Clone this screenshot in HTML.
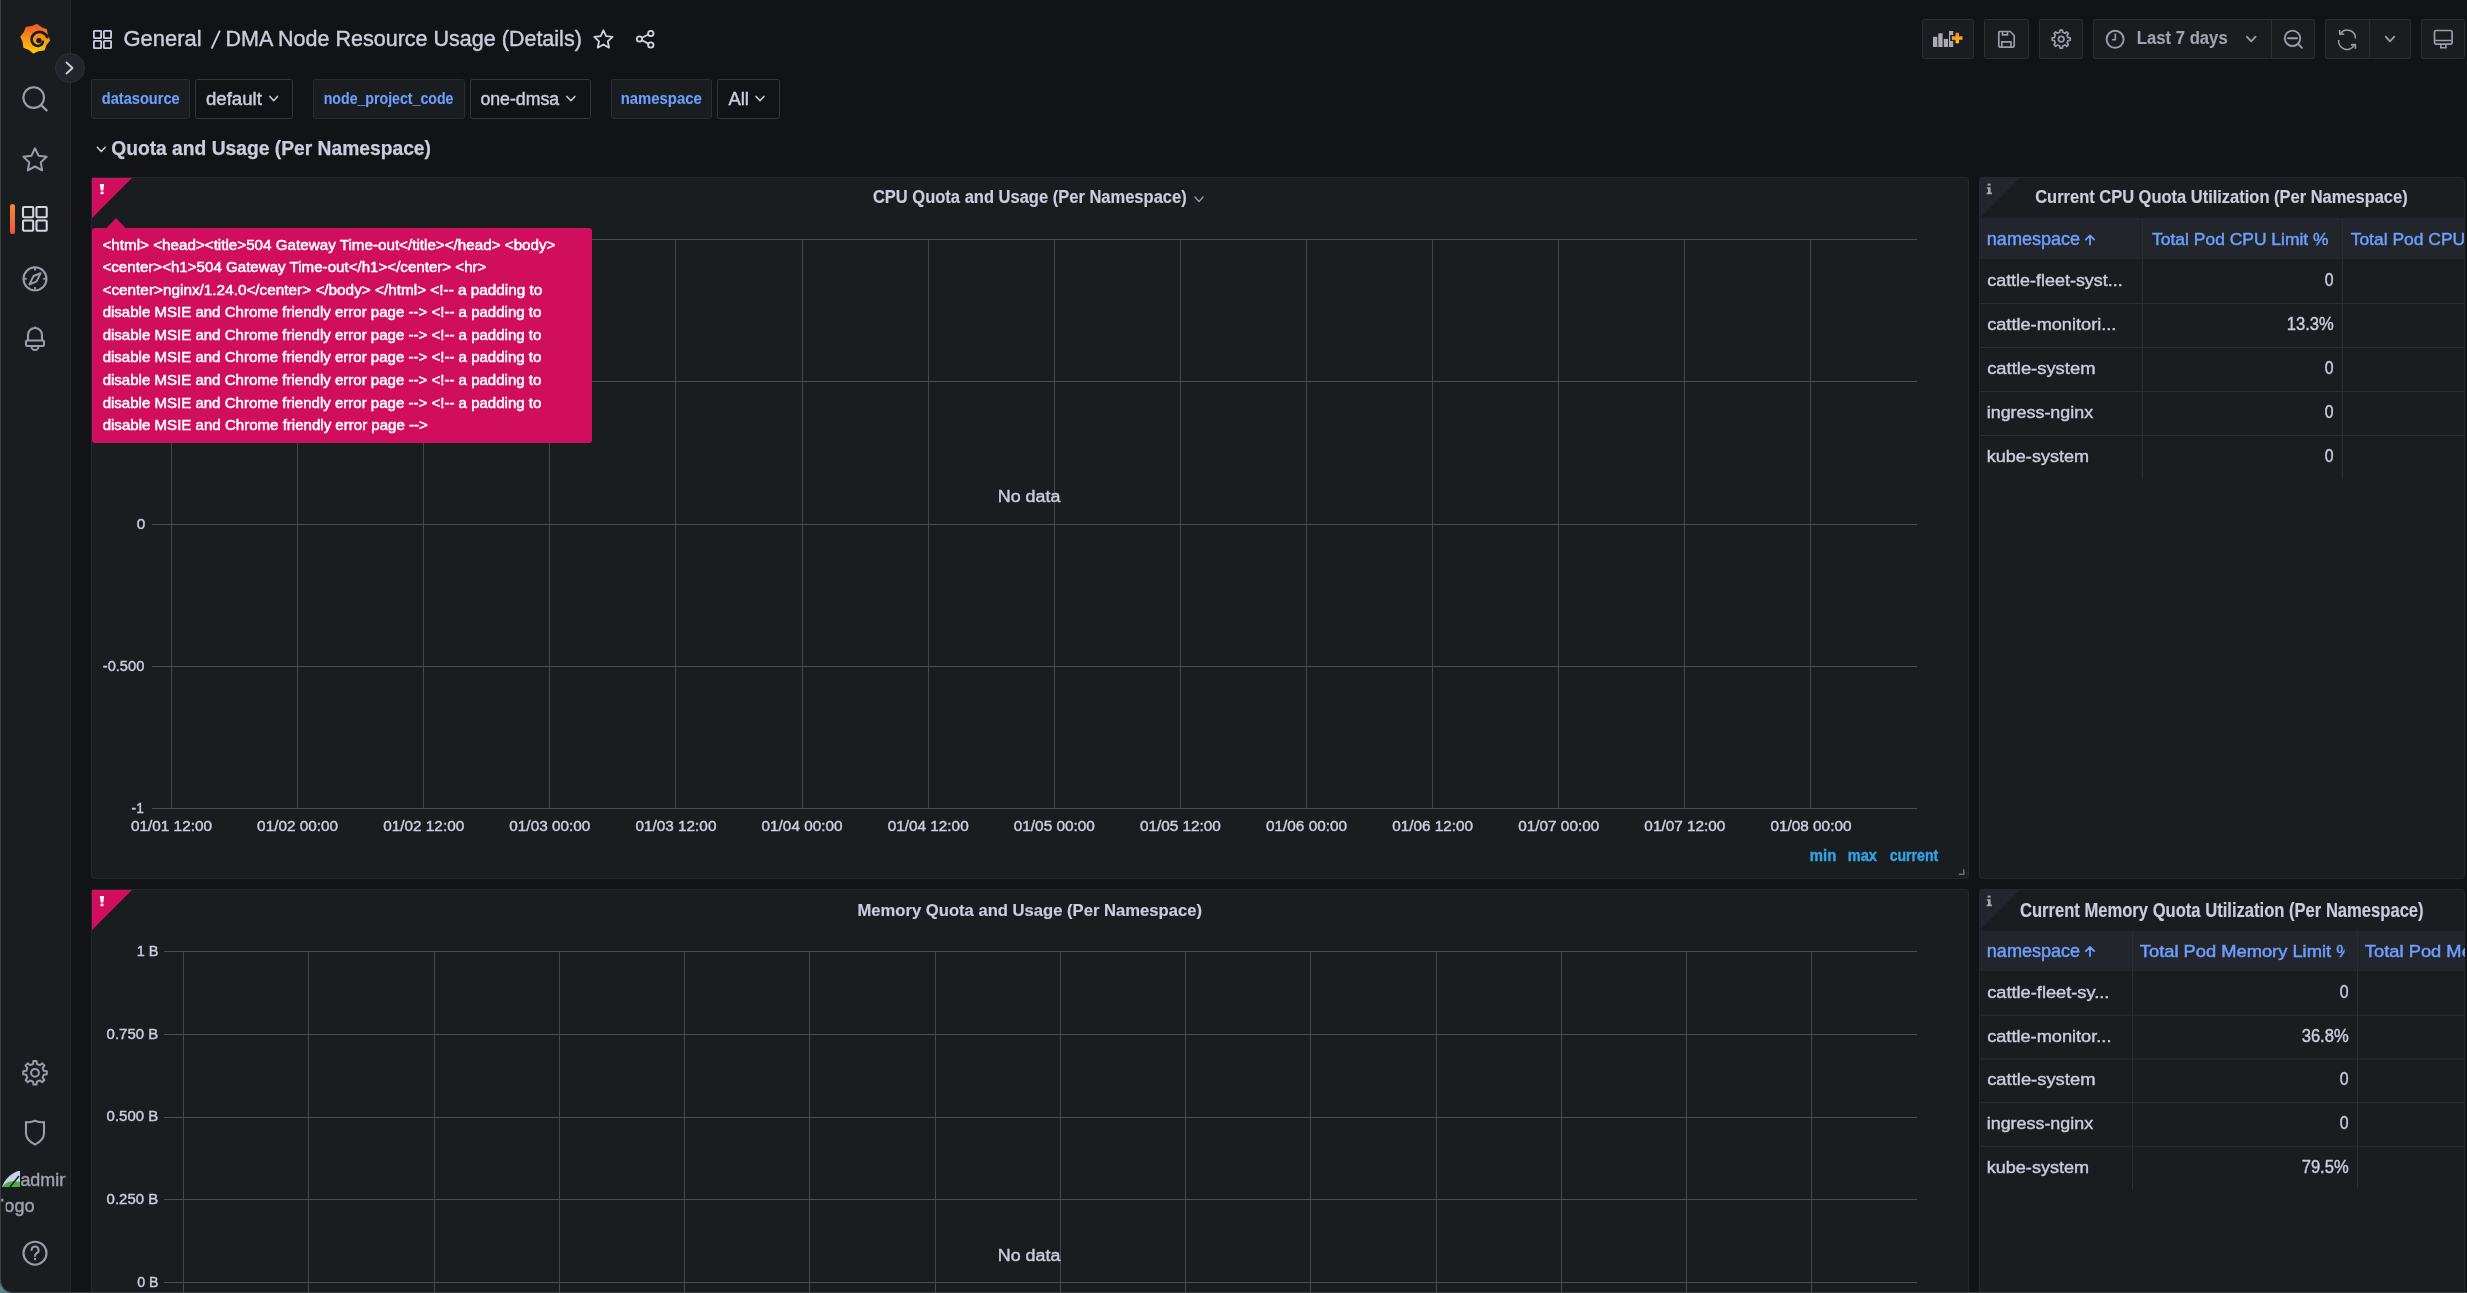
<!DOCTYPE html>
<html><head><meta charset="utf-8"><title>Grafana</title>
<style>
html,body{margin:0;padding:0;background:#121317;overflow:hidden;}
svg{display:block;font-family:"Liberation Sans",sans-serif;will-change:transform;}
</style></head><body>
<svg width="2467" height="1293" viewBox="0 0 2467 1293">
<rect x="0" y="0" width="2467" height="1293" rx="0" fill="#121317"/>
<rect x="0" y="0" width="70.5" height="1293" rx="0" fill="#1a1d20"/>
<line x1="70.5" y1="0" x2="70.5" y2="1293" stroke="#25282d" stroke-width="1"/>
<line x1="0.5" y1="0" x2="0.5" y2="1293" stroke="#3c3d3f" stroke-width="1"/>
<text x="123.51" y="46.10" font-size="22.61" font-weight="400" fill="#ccccdc" stroke="#ccccdc" stroke-width="0.42" textLength="78.17" lengthAdjust="spacingAndGlyphs">General</text>
<line x1="211.6" y1="48.6" x2="219.9" y2="30.6" stroke="#ccccdc" stroke-width="1.9"/>
<text x="225.49" y="46.10" font-size="22.61" font-weight="400" fill="#ccccdc" stroke="#ccccdc" stroke-width="0.42" textLength="356.35" lengthAdjust="spacingAndGlyphs">DMA Node Resource Usage (Details)</text>
<rect x="91.5" y="79.5" width="98" height="39" rx="2" fill="#1a1d20" stroke="#2a2d32" stroke-width="1"/>
<rect x="195.5" y="79.5" width="97" height="39" rx="2" fill="#121317" stroke="#33363b" stroke-width="1"/>
<rect x="313.5" y="79.5" width="151" height="39" rx="2" fill="#1a1d20" stroke="#2a2d32" stroke-width="1"/>
<rect x="470.5" y="79.5" width="120" height="39" rx="2" fill="#121317" stroke="#33363b" stroke-width="1"/>
<rect x="611.5" y="79.5" width="100" height="39" rx="2" fill="#1a1d20" stroke="#2a2d32" stroke-width="1"/>
<rect x="717.5" y="79.5" width="62" height="39" rx="2" fill="#121317" stroke="#33363b" stroke-width="1"/>
<text x="101.77" y="103.80" font-size="15.66" font-weight="700" fill="#6e9fff" stroke="#6e9fff" stroke-width="0.1" textLength="77.90" lengthAdjust="spacingAndGlyphs">datasource</text>
<text x="205.96" y="104.80" font-size="17.78" font-weight="400" fill="#ccccdc" stroke="#ccccdc" stroke-width="0.42" textLength="55.97" lengthAdjust="spacingAndGlyphs">default</text>
<text x="323.73" y="104.00" font-size="16.07" font-weight="700" fill="#6e9fff" stroke="#6e9fff" stroke-width="0.1" textLength="129.70" lengthAdjust="spacingAndGlyphs">node_project_code</text>
<text x="480.40" y="104.80" font-size="17.78" font-weight="400" fill="#ccccdc" stroke="#ccccdc" stroke-width="0.42" textLength="78.82" lengthAdjust="spacingAndGlyphs">one-dmsa</text>
<text x="620.78" y="104.00" font-size="15.80" font-weight="700" fill="#6e9fff" stroke="#6e9fff" stroke-width="0.1" textLength="80.93" lengthAdjust="spacingAndGlyphs">namespace</text>
<text x="728.41" y="104.80" font-size="17.78" font-weight="400" fill="#ccccdc" stroke="#ccccdc" stroke-width="0.42" textLength="20.51" lengthAdjust="spacingAndGlyphs">All</text>
<text x="111.16" y="154.80" font-size="19.97" font-weight="700" fill="#ccccdc" stroke="#ccccdc" stroke-width="0.25" textLength="319.83" lengthAdjust="spacingAndGlyphs">Quota and Usage (Per Namespace)</text>
<rect x="91.5" y="177.5" width="1877" height="701" rx="3" fill="#1a1d20" stroke="#25282d" stroke-width="1"/>
<rect x="1979.5" y="177.5" width="485" height="701" rx="3" fill="#1a1d20" stroke="#25282d" stroke-width="1"/>
<rect x="91.5" y="889.5" width="1877" height="420" rx="3" fill="#1a1d20" stroke="#25282d" stroke-width="1"/>
<rect x="1979.5" y="889.5" width="485" height="420" rx="3" fill="#1a1d20" stroke="#25282d" stroke-width="1"/>
<text x="872.91" y="203.00" font-size="17.55" font-weight="700" fill="#ccccdc" stroke="#ccccdc" stroke-width="0.15" textLength="313.78" lengthAdjust="spacingAndGlyphs">CPU Quota and Usage (Per Namespace)</text>
<text x="857.49" y="916.20" font-size="17.28" font-weight="700" fill="#ccccdc" stroke="#ccccdc" stroke-width="0.15" textLength="344.45" lengthAdjust="spacingAndGlyphs">Memory Quota and Usage (Per Namespace)</text>
<text x="2035.22" y="203.40" font-size="17.97" font-weight="700" fill="#ccccdc" stroke="#ccccdc" stroke-width="0.15" textLength="372.46" lengthAdjust="spacingAndGlyphs">Current CPU Quota Utilization (Per Namespace)</text>
<text x="2019.91" y="917.40" font-size="20.17" font-weight="700" fill="#ccccdc" stroke="#ccccdc" stroke-width="0.15" textLength="403.72" lengthAdjust="spacingAndGlyphs">Current Memory Quota Utilization (Per Namespace)</text>
<line x1="152" y1="239.5" x2="1917" y2="239.5" stroke="#4a4c4f" stroke-width="1"/>
<line x1="152" y1="381.5" x2="1917" y2="381.5" stroke="#4a4c4f" stroke-width="1"/>
<line x1="152" y1="524.5" x2="1917" y2="524.5" stroke="#4a4c4f" stroke-width="1"/>
<line x1="152" y1="666.5" x2="1917" y2="666.5" stroke="#4a4c4f" stroke-width="1"/>
<line x1="152" y1="808.5" x2="1917" y2="808.5" stroke="#4a4c4f" stroke-width="1"/>
<line x1="171.5" y1="239" x2="171.5" y2="808.5" stroke="#45474a" stroke-width="1"/>
<line x1="297.5" y1="239" x2="297.5" y2="808.5" stroke="#45474a" stroke-width="1"/>
<line x1="423.5" y1="239" x2="423.5" y2="808.5" stroke="#45474a" stroke-width="1"/>
<line x1="549.5" y1="239" x2="549.5" y2="808.5" stroke="#45474a" stroke-width="1"/>
<line x1="675.5" y1="239" x2="675.5" y2="808.5" stroke="#45474a" stroke-width="1"/>
<line x1="802.5" y1="239" x2="802.5" y2="808.5" stroke="#45474a" stroke-width="1"/>
<line x1="928.5" y1="239" x2="928.5" y2="808.5" stroke="#45474a" stroke-width="1"/>
<line x1="1054.5" y1="239" x2="1054.5" y2="808.5" stroke="#45474a" stroke-width="1"/>
<line x1="1180.5" y1="239" x2="1180.5" y2="808.5" stroke="#45474a" stroke-width="1"/>
<line x1="1306.5" y1="239" x2="1306.5" y2="808.5" stroke="#45474a" stroke-width="1"/>
<line x1="1432.5" y1="239" x2="1432.5" y2="808.5" stroke="#45474a" stroke-width="1"/>
<line x1="1558.5" y1="239" x2="1558.5" y2="808.5" stroke="#45474a" stroke-width="1"/>
<line x1="1684.5" y1="239" x2="1684.5" y2="808.5" stroke="#45474a" stroke-width="1"/>
<line x1="1810.5" y1="239" x2="1810.5" y2="808.5" stroke="#45474a" stroke-width="1"/>
<text x="131.00" y="831.20" font-size="14.41" font-weight="400" fill="#ccccdc" stroke="#ccccdc" stroke-width="0.42" textLength="80.97" lengthAdjust="spacingAndGlyphs">01/01 12:00</text>
<text x="257.11" y="831.20" font-size="14.41" font-weight="400" fill="#ccccdc" stroke="#ccccdc" stroke-width="0.42" textLength="80.97" lengthAdjust="spacingAndGlyphs">01/02 00:00</text>
<text x="383.23" y="831.20" font-size="14.41" font-weight="400" fill="#ccccdc" stroke="#ccccdc" stroke-width="0.42" textLength="80.97" lengthAdjust="spacingAndGlyphs">01/02 12:00</text>
<text x="509.34" y="831.20" font-size="14.41" font-weight="400" fill="#ccccdc" stroke="#ccccdc" stroke-width="0.42" textLength="80.97" lengthAdjust="spacingAndGlyphs">01/03 00:00</text>
<text x="635.46" y="831.20" font-size="14.41" font-weight="400" fill="#ccccdc" stroke="#ccccdc" stroke-width="0.42" textLength="80.97" lengthAdjust="spacingAndGlyphs">01/03 12:00</text>
<text x="761.57" y="831.20" font-size="14.41" font-weight="400" fill="#ccccdc" stroke="#ccccdc" stroke-width="0.42" textLength="80.97" lengthAdjust="spacingAndGlyphs">01/04 00:00</text>
<text x="887.69" y="831.20" font-size="14.41" font-weight="400" fill="#ccccdc" stroke="#ccccdc" stroke-width="0.42" textLength="80.97" lengthAdjust="spacingAndGlyphs">01/04 12:00</text>
<text x="1013.80" y="831.20" font-size="14.41" font-weight="400" fill="#ccccdc" stroke="#ccccdc" stroke-width="0.42" textLength="80.97" lengthAdjust="spacingAndGlyphs">01/05 00:00</text>
<text x="1139.92" y="831.20" font-size="14.41" font-weight="400" fill="#ccccdc" stroke="#ccccdc" stroke-width="0.42" textLength="80.97" lengthAdjust="spacingAndGlyphs">01/05 12:00</text>
<text x="1266.03" y="831.20" font-size="14.41" font-weight="400" fill="#ccccdc" stroke="#ccccdc" stroke-width="0.42" textLength="80.97" lengthAdjust="spacingAndGlyphs">01/06 00:00</text>
<text x="1392.15" y="831.20" font-size="14.41" font-weight="400" fill="#ccccdc" stroke="#ccccdc" stroke-width="0.42" textLength="80.97" lengthAdjust="spacingAndGlyphs">01/06 12:00</text>
<text x="1518.26" y="831.20" font-size="14.41" font-weight="400" fill="#ccccdc" stroke="#ccccdc" stroke-width="0.42" textLength="80.97" lengthAdjust="spacingAndGlyphs">01/07 00:00</text>
<text x="1644.38" y="831.20" font-size="14.41" font-weight="400" fill="#ccccdc" stroke="#ccccdc" stroke-width="0.42" textLength="80.97" lengthAdjust="spacingAndGlyphs">01/07 12:00</text>
<text x="1770.49" y="831.20" font-size="14.41" font-weight="400" fill="#ccccdc" stroke="#ccccdc" stroke-width="0.42" textLength="80.97" lengthAdjust="spacingAndGlyphs">01/08 00:00</text>
<text x="136.79" y="528.60" font-size="15.27" font-weight="400" fill="#ccccdc" stroke="#ccccdc" stroke-width="0.42" textLength="8.55" lengthAdjust="spacingAndGlyphs">0</text>
<text x="102.75" y="671.00" font-size="15.41" font-weight="400" fill="#ccccdc" stroke="#ccccdc" stroke-width="0.42" textLength="41.56" lengthAdjust="spacingAndGlyphs">-0.500</text>
<text x="131.59" y="813.00" font-size="14.91" font-weight="400" fill="#ccccdc" stroke="#ccccdc" stroke-width="0.42" textLength="12.20" lengthAdjust="spacingAndGlyphs">-1</text>
<text x="997.78" y="501.90" font-size="17.09" font-weight="400" fill="#ccccdc" stroke="#ccccdc" stroke-width="0.42" textLength="62.66" lengthAdjust="spacingAndGlyphs">No data</text>
<text x="1809.85" y="861.00" font-size="16.50" font-weight="700" fill="#33a2e5" stroke="#33a2e5" stroke-width="0.42" textLength="26.38" lengthAdjust="spacingAndGlyphs">min</text>
<text x="1847.76" y="861.00" font-size="16.50" font-weight="700" fill="#33a2e5" stroke="#33a2e5" stroke-width="0.42" textLength="29.12" lengthAdjust="spacingAndGlyphs">max</text>
<text x="1889.65" y="861.00" font-size="16.50" font-weight="700" fill="#33a2e5" stroke="#33a2e5" stroke-width="0.42" textLength="48.66" lengthAdjust="spacingAndGlyphs">current</text>
<line x1="164" y1="951.5" x2="1917" y2="951.5" stroke="#4a4c4f" stroke-width="1"/>
<line x1="164" y1="1034.5" x2="1917" y2="1034.5" stroke="#4a4c4f" stroke-width="1"/>
<line x1="164" y1="1117.5" x2="1917" y2="1117.5" stroke="#4a4c4f" stroke-width="1"/>
<line x1="164" y1="1199.5" x2="1917" y2="1199.5" stroke="#4a4c4f" stroke-width="1"/>
<line x1="164" y1="1282.5" x2="1917" y2="1282.5" stroke="#4a4c4f" stroke-width="1"/>
<line x1="183.5" y1="951" x2="183.5" y2="1293" stroke="#45474a" stroke-width="1"/>
<line x1="308.5" y1="951" x2="308.5" y2="1293" stroke="#45474a" stroke-width="1"/>
<line x1="434.5" y1="951" x2="434.5" y2="1293" stroke="#45474a" stroke-width="1"/>
<line x1="559.5" y1="951" x2="559.5" y2="1293" stroke="#45474a" stroke-width="1"/>
<line x1="684.5" y1="951" x2="684.5" y2="1293" stroke="#45474a" stroke-width="1"/>
<line x1="809.5" y1="951" x2="809.5" y2="1293" stroke="#45474a" stroke-width="1"/>
<line x1="935.5" y1="951" x2="935.5" y2="1293" stroke="#45474a" stroke-width="1"/>
<line x1="1060.5" y1="951" x2="1060.5" y2="1293" stroke="#45474a" stroke-width="1"/>
<line x1="1185.5" y1="951" x2="1185.5" y2="1293" stroke="#45474a" stroke-width="1"/>
<line x1="1310.5" y1="951" x2="1310.5" y2="1293" stroke="#45474a" stroke-width="1"/>
<line x1="1436.5" y1="951" x2="1436.5" y2="1293" stroke="#45474a" stroke-width="1"/>
<line x1="1561.5" y1="951" x2="1561.5" y2="1293" stroke="#45474a" stroke-width="1"/>
<line x1="1686.5" y1="951" x2="1686.5" y2="1293" stroke="#45474a" stroke-width="1"/>
<line x1="1811.5" y1="951" x2="1811.5" y2="1293" stroke="#45474a" stroke-width="1"/>
<text x="136.72" y="955.80" font-size="15.20" font-weight="400" fill="#ccccdc" stroke="#ccccdc" stroke-width="0.42" textLength="21.81" lengthAdjust="spacingAndGlyphs">1 B</text>
<text x="106.61" y="1038.60" font-size="14.99" font-weight="400" fill="#ccccdc" stroke="#ccccdc" stroke-width="0.42" textLength="51.56" lengthAdjust="spacingAndGlyphs">0.750 B</text>
<text x="106.61" y="1121.40" font-size="14.99" font-weight="400" fill="#ccccdc" stroke="#ccccdc" stroke-width="0.42" textLength="51.56" lengthAdjust="spacingAndGlyphs">0.500 B</text>
<text x="106.61" y="1204.20" font-size="14.99" font-weight="400" fill="#ccccdc" stroke="#ccccdc" stroke-width="0.42" textLength="51.56" lengthAdjust="spacingAndGlyphs">0.250 B</text>
<text x="137.24" y="1287.00" font-size="14.99" font-weight="400" fill="#ccccdc" stroke="#ccccdc" stroke-width="0.42" textLength="21.27" lengthAdjust="spacingAndGlyphs">0 B</text>
<text x="997.78" y="1260.80" font-size="17.09" font-weight="400" fill="#ccccdc" stroke="#ccccdc" stroke-width="0.42" textLength="62.66" lengthAdjust="spacingAndGlyphs">No data</text>
<path d="M92 178 L132 178 L92 218 Z" fill="#d10e5c"/>
<path d="M99.9 184 L104.1 184 L103.3 190.6 L100.7 190.6 Z" fill="#fff"/><rect x="100.6" y="191.6" width="2.9" height="2.6" fill="#fff"/>
<path d="M92 890 L132 890 L92 930 Z" fill="#d10e5c"/>
<path d="M99.9 896 L104.1 896 L103.3 902.6 L100.7 902.6 Z" fill="#fff"/><rect x="100.6" y="903.6" width="2.9" height="2.6" fill="#fff"/>
<path d="M1980 178 L2020 178 L1980 218 Z" fill="#22252b"/>
<rect x="1987.6" y="183.6" width="3" height="2" fill="#a8a9b4"/><path d="M1986.8 187.2 L1990.6 187.2 L1990.6 192.6 L1991.9 192.6 L1991.9 194.2 L1986.8 194.2 L1986.8 192.6 L1988 192.6 L1988 188.8 L1986.8 188.8 Z" fill="#a8a9b4"/>
<path d="M1980 890 L2020 890 L1980 930 Z" fill="#22252b"/>
<rect x="1987.6" y="895.6" width="3" height="2" fill="#a8a9b4"/><path d="M1986.8 899.2 L1990.6 899.2 L1990.6 904.6 L1991.9 904.6 L1991.9 906.2 L1986.8 906.2 L1986.8 904.6 L1988 904.6 L1988 900.8 L1986.8 900.8 Z" fill="#a8a9b4"/>
<rect x="1980" y="218" width="484" height="41" rx="0" fill="#22252b"/>
<line x1="2142.5" y1="218" x2="2142.5" y2="479" stroke="#2a2d32" stroke-width="1"/>
<line x1="2342.5" y1="218" x2="2342.5" y2="479" stroke="#2a2d32" stroke-width="1"/>
<line x1="1980" y1="303.5" x2="2464" y2="303.5" stroke="#2a2d32" stroke-width="1"/>
<line x1="1980" y1="347.5" x2="2464" y2="347.5" stroke="#2a2d32" stroke-width="1"/>
<line x1="1980" y1="391.5" x2="2464" y2="391.5" stroke="#2a2d32" stroke-width="1"/>
<line x1="1980" y1="435.5" x2="2464" y2="435.5" stroke="#2a2d32" stroke-width="1"/>
<text x="1986.85" y="245.00" font-size="17.80" font-weight="400" fill="#6e9fff" stroke="#6e9fff" stroke-width="0.45" textLength="93.24" lengthAdjust="spacingAndGlyphs">namespace</text>
<path d="M2090 244.6 L2090 235.4 M2085.8 239.6 L2090 235.4 L2094.2 239.6" fill="none" stroke="#6e9fff" stroke-width="1.8" stroke-linecap="round" stroke-linejoin="round"/>
<text x="2152.08" y="245.00" font-size="17.07" font-weight="400" fill="#6e9fff" stroke="#6e9fff" stroke-width="0.45" textLength="176.51" lengthAdjust="spacingAndGlyphs">Total Pod CPU Limit %</text>
<text x="1987.19" y="286.00" font-size="17.37" font-weight="400" fill="#ccccdc" stroke="#ccccdc" stroke-width="0.42" textLength="135.56" lengthAdjust="spacingAndGlyphs">cattle-fleet-syst...</text>
<text x="1987.18" y="330.00" font-size="17.37" font-weight="400" fill="#ccccdc" stroke="#ccccdc" stroke-width="0.42" textLength="129.20" lengthAdjust="spacingAndGlyphs">cattle-monitori...</text>
<text x="1987.17" y="374.00" font-size="17.37" font-weight="400" fill="#ccccdc" stroke="#ccccdc" stroke-width="0.42" textLength="108.32" lengthAdjust="spacingAndGlyphs">cattle-system</text>
<text x="1986.75" y="418.00" font-size="17.37" font-weight="400" fill="#ccccdc" stroke="#ccccdc" stroke-width="0.42" textLength="106.38" lengthAdjust="spacingAndGlyphs">ingress-nginx</text>
<text x="1986.74" y="462.00" font-size="17.37" font-weight="400" fill="#ccccdc" stroke="#ccccdc" stroke-width="0.42" textLength="102.30" lengthAdjust="spacingAndGlyphs">kube-system</text>
<text x="2324.85" y="286.00" font-size="17.60" font-weight="400" fill="#ccccdc" stroke="#ccccdc" stroke-width="0.42" textLength="8.81" lengthAdjust="spacingAndGlyphs">0</text>
<text x="2286.71" y="330.00" font-size="17.60" font-weight="400" fill="#ccccdc" stroke="#ccccdc" stroke-width="0.42" textLength="46.97" lengthAdjust="spacingAndGlyphs">13.3%</text>
<text x="2324.85" y="374.00" font-size="17.60" font-weight="400" fill="#ccccdc" stroke="#ccccdc" stroke-width="0.42" textLength="8.81" lengthAdjust="spacingAndGlyphs">0</text>
<text x="2324.85" y="418.00" font-size="17.60" font-weight="400" fill="#ccccdc" stroke="#ccccdc" stroke-width="0.42" textLength="8.81" lengthAdjust="spacingAndGlyphs">0</text>
<text x="2324.85" y="462.00" font-size="17.60" font-weight="400" fill="#ccccdc" stroke="#ccccdc" stroke-width="0.42" textLength="8.81" lengthAdjust="spacingAndGlyphs">0</text>
<rect x="1980" y="930.5" width="484" height="40.5" rx="0" fill="#22252b"/>
<line x1="2132.5" y1="930.5" x2="2132.5" y2="1189.5" stroke="#2a2d32" stroke-width="1"/>
<line x1="2357.5" y1="930.5" x2="2357.5" y2="1189.5" stroke="#2a2d32" stroke-width="1"/>
<line x1="1980" y1="1015.2" x2="2464" y2="1015.2" stroke="#2a2d32" stroke-width="1"/>
<line x1="1980" y1="1058.9" x2="2464" y2="1058.9" stroke="#2a2d32" stroke-width="1"/>
<line x1="1980" y1="1102.6" x2="2464" y2="1102.6" stroke="#2a2d32" stroke-width="1"/>
<line x1="1980" y1="1146.3" x2="2464" y2="1146.3" stroke="#2a2d32" stroke-width="1"/>
<text x="1986.85" y="956.50" font-size="17.80" font-weight="400" fill="#6e9fff" stroke="#6e9fff" stroke-width="0.45" textLength="93.24" lengthAdjust="spacingAndGlyphs">namespace</text>
<path d="M2090 956.1 L2090 946.9 M2085.8 951.1 L2090 946.9 L2094.2 951.1" fill="none" stroke="#6e9fff" stroke-width="1.8" stroke-linecap="round" stroke-linejoin="round"/>
<clipPath id="hc930"><rect x="2135" y="930.5" width="209.5999999999999" height="40.5"/></clipPath><g clip-path="url(#hc930)">
<text x="2139.86" y="956.50" font-size="15.69" font-weight="400" fill="#6e9fff" stroke="#6e9fff" stroke-width="0.45" textLength="212.56" lengthAdjust="spacingAndGlyphs">Total Pod Memory Limit %</text>
</g>
<text x="1987.18" y="998.00" font-size="17.37" font-weight="400" fill="#ccccdc" stroke="#ccccdc" stroke-width="0.42" textLength="122.26" lengthAdjust="spacingAndGlyphs">cattle-fleet-sy...</text>
<text x="1987.18" y="1041.70" font-size="17.37" font-weight="400" fill="#ccccdc" stroke="#ccccdc" stroke-width="0.42" textLength="124.26" lengthAdjust="spacingAndGlyphs">cattle-monitor...</text>
<text x="1987.17" y="1085.40" font-size="17.37" font-weight="400" fill="#ccccdc" stroke="#ccccdc" stroke-width="0.42" textLength="108.32" lengthAdjust="spacingAndGlyphs">cattle-system</text>
<text x="1986.75" y="1129.10" font-size="17.37" font-weight="400" fill="#ccccdc" stroke="#ccccdc" stroke-width="0.42" textLength="106.38" lengthAdjust="spacingAndGlyphs">ingress-nginx</text>
<text x="1986.74" y="1172.80" font-size="17.37" font-weight="400" fill="#ccccdc" stroke="#ccccdc" stroke-width="0.42" textLength="102.30" lengthAdjust="spacingAndGlyphs">kube-system</text>
<text x="2339.85" y="998.00" font-size="17.60" font-weight="400" fill="#ccccdc" stroke="#ccccdc" stroke-width="0.42" textLength="8.81" lengthAdjust="spacingAndGlyphs">0</text>
<text x="2301.70" y="1041.70" font-size="17.60" font-weight="400" fill="#ccccdc" stroke="#ccccdc" stroke-width="0.42" textLength="46.98" lengthAdjust="spacingAndGlyphs">36.8%</text>
<text x="2339.85" y="1085.40" font-size="17.60" font-weight="400" fill="#ccccdc" stroke="#ccccdc" stroke-width="0.42" textLength="8.81" lengthAdjust="spacingAndGlyphs">0</text>
<text x="2339.85" y="1129.10" font-size="17.60" font-weight="400" fill="#ccccdc" stroke="#ccccdc" stroke-width="0.42" textLength="8.81" lengthAdjust="spacingAndGlyphs">0</text>
<text x="2301.70" y="1172.80" font-size="17.60" font-weight="400" fill="#ccccdc" stroke="#ccccdc" stroke-width="0.42" textLength="46.98" lengthAdjust="spacingAndGlyphs">79.5%</text>
<clipPath id="c3"><rect x="2343" y="200" width="122" height="100"/></clipPath><clipPath id="c4"><rect x="2358" y="920" width="107" height="100"/></clipPath>
<g clip-path="url(#c3)">
<text x="2350.68" y="245.10" font-size="17.07" font-weight="400" fill="#6e9fff" stroke="#6e9fff" stroke-width="0.45" textLength="176.51" lengthAdjust="spacingAndGlyphs">Total Pod CPU Limit %</text>
</g><g clip-path="url(#c4)">
<text x="2364.86" y="956.50" font-size="17.07" font-weight="400" fill="#6e9fff" stroke="#6e9fff" stroke-width="0.45" textLength="205.78" lengthAdjust="spacingAndGlyphs">Total Pod Memory Usage</text>
</g>
<path d="M106 228.5 L116 218 L126 228.5 Z" fill="#d10e5c"/>
<rect x="92" y="228" width="500" height="215" rx="3" fill="#d10e5c"/>
<text x="102.49" y="249.60" font-size="15.20" font-weight="400" fill="#ffffff" stroke="#ffffff" stroke-width="0.5" textLength="453.01" lengthAdjust="spacingAndGlyphs">&lt;html&gt; &lt;head&gt;&lt;title&gt;504 Gateway Time-out&lt;/title&gt;&lt;/head&gt; &lt;body&gt;</text>
<text x="102.49" y="272.16" font-size="15.20" font-weight="400" fill="#ffffff" stroke="#ffffff" stroke-width="0.5" textLength="383.96" lengthAdjust="spacingAndGlyphs">&lt;center&gt;&lt;h1&gt;504 Gateway Time-out&lt;/h1&gt;&lt;/center&gt; &lt;hr&gt;</text>
<text x="102.48" y="294.72" font-size="15.20" font-weight="400" fill="#ffffff" stroke="#ffffff" stroke-width="0.5" textLength="439.88" lengthAdjust="spacingAndGlyphs">&lt;center&gt;nginx/1.24.0&lt;/center&gt; &lt;/body&gt; &lt;/html&gt; &lt;!-- a padding to</text>
<text x="102.65" y="317.28" font-size="15.20" font-weight="400" fill="#ffffff" stroke="#ffffff" stroke-width="0.5" textLength="438.74" lengthAdjust="spacingAndGlyphs">disable MSIE and Chrome friendly error page --&gt; &lt;!-- a padding to</text>
<text x="102.65" y="339.84" font-size="15.20" font-weight="400" fill="#ffffff" stroke="#ffffff" stroke-width="0.5" textLength="438.74" lengthAdjust="spacingAndGlyphs">disable MSIE and Chrome friendly error page --&gt; &lt;!-- a padding to</text>
<text x="102.65" y="362.40" font-size="15.20" font-weight="400" fill="#ffffff" stroke="#ffffff" stroke-width="0.5" textLength="438.74" lengthAdjust="spacingAndGlyphs">disable MSIE and Chrome friendly error page --&gt; &lt;!-- a padding to</text>
<text x="102.65" y="384.96" font-size="15.20" font-weight="400" fill="#ffffff" stroke="#ffffff" stroke-width="0.5" textLength="438.74" lengthAdjust="spacingAndGlyphs">disable MSIE and Chrome friendly error page --&gt; &lt;!-- a padding to</text>
<text x="102.65" y="407.52" font-size="15.20" font-weight="400" fill="#ffffff" stroke="#ffffff" stroke-width="0.5" textLength="438.74" lengthAdjust="spacingAndGlyphs">disable MSIE and Chrome friendly error page --&gt; &lt;!-- a padding to</text>
<text x="102.65" y="430.08" font-size="15.20" font-weight="400" fill="#ffffff" stroke="#ffffff" stroke-width="0.5" textLength="325.24" lengthAdjust="spacingAndGlyphs">disable MSIE and Chrome friendly error page --&gt;</text>
<defs><linearGradient id="glg" x1="0" y1="0" x2="0" y2="1"><stop offset="0" stop-color="#f05a28"/><stop offset="1" stop-color="#fbca0a"/></linearGradient><linearGradient id="obar" x1="0" y1="0" x2="0" y2="1"><stop offset="0" stop-color="#f7893b"/><stop offset="1" stop-color="#f0553a"/></linearGradient><linearGradient id="plus" x1="0" y1="0" x2="0" y2="1"><stop offset="0" stop-color="#f27a3a"/><stop offset="1" stop-color="#fbc80e"/></linearGradient></defs>
<polygon points="36.86,24.80 41.09,28.14 46.13,30.02 46.76,35.37 49.00,40.26 45.66,44.49 43.78,49.53 38.43,50.16 33.54,52.40 29.31,49.06 24.27,47.18 23.64,41.83 21.40,36.94 24.74,32.71 26.62,27.67 31.97,27.04" fill="url(#glg)" stroke="url(#glg)" stroke-width="2" stroke-linejoin="round"/>
<path d="M47.25 37.05 L46.85 36.30 L46.39 35.59 L45.87 34.94 L45.29 34.34 L44.67 33.80 L44.00 33.33 L43.31 32.93 L42.58 32.59 L41.83 32.33 L41.07 32.14 L40.29 32.02 L39.52 31.97 L38.76 32.00 L38.00 32.10 L37.27 32.26 L36.56 32.49 L35.89 32.78 L35.25 33.14 L34.65 33.54 L34.09 34.00 L33.59 34.50 L33.14 35.04 L32.75 35.61 L32.41 36.21 L32.14 36.84 L31.93 37.48 L31.78 38.13 L31.69 38.78 L31.67 39.43 L31.70 40.08 L31.80 40.71 L31.95 41.33 L32.15 41.92 L32.41 42.48 L32.72 43.01 L33.07 43.50 L33.46 43.95 L33.88 44.36 L34.34 44.72 L34.82 45.03 L35.33 45.30 L35.85 45.51 L36.38 45.67 L36.92 45.78 L37.45 45.83 L37.99 45.84 L38.51 45.80 L39.02 45.70 L39.52 45.57 L39.99 45.38 L40.44 45.16 L40.85 44.90 L41.24 44.61 L41.59 44.28 L41.90 43.93 L42.18 43.56 L42.41 43.17 L42.60 42.76 L42.76 42.34 L42.87 41.92" fill="none" stroke="#1a1d20" stroke-width="2.7" stroke-linecap="round"/>
<circle cx="38.9" cy="40.6" r="2.7" fill="#1a1d20"/>
<circle cx="70" cy="68" r="14.5" fill="#22252b" stroke="#2e3136" stroke-width="1"/>
<path d="M66.5 62.5 L72.5 68 L66.5 73.5" fill="none" stroke="#ccccdc" stroke-width="1.9" stroke-linecap="round" stroke-linejoin="round"/>
<circle cx="33.7" cy="97.6" r="10.3" fill="none" stroke="#9b9ca8" stroke-width="2.1"/>
<line x1="41.2" y1="105.2" x2="46.6" y2="110.4" stroke="#9b9ca8" stroke-width="2.3" stroke-linecap="round"/>
<polygon points="35.00,148.30 38.53,155.65 46.60,156.73 40.71,162.35 42.17,170.37 35.00,166.50 27.83,170.37 29.29,162.35 23.40,156.73 31.47,155.65" fill="none" stroke="#9b9ca8" stroke-width="2.0" stroke-linejoin="round"/>
<rect x="23" y="207" width="10.2" height="10.2" rx="1" fill="none" stroke="#d3d4de" stroke-width="2.1"/>
<rect x="36.5" y="207" width="10.2" height="10.2" rx="1" fill="none" stroke="#d3d4de" stroke-width="2.1"/>
<rect x="23" y="220.5" width="10.2" height="10.2" rx="1" fill="none" stroke="#d3d4de" stroke-width="2.1"/>
<rect x="36.5" y="220.5" width="10.2" height="10.2" rx="1" fill="none" stroke="#d3d4de" stroke-width="2.1"/>
<rect x="10" y="204" width="5" height="30" rx="2.5" fill="url(#obar)"/>
<circle cx="35" cy="278.8" r="11.5" fill="none" stroke="#9b9ca8" stroke-width="2.1"/>
<line x1="35" y1="268" x2="35" y2="270.5" stroke="#9b9ca8" stroke-width="1.8"/>
<line x1="35" y1="287.1" x2="35" y2="289.6" stroke="#9b9ca8" stroke-width="1.8"/>
<line x1="24.2" y1="278.8" x2="26.7" y2="278.8" stroke="#9b9ca8" stroke-width="1.8"/>
<line x1="43.3" y1="278.8" x2="45.8" y2="278.8" stroke="#9b9ca8" stroke-width="1.8"/>
<path d="M40.6 273.2 L36.4 281.6 L29.4 284.4 L33.6 276 Z" fill="none" stroke="#9b9ca8" stroke-width="1.9" stroke-linejoin="round"/>
<path d="M28 340.5 L28 335 A7 7 0 0 1 42 335 L42 340.5" fill="none" stroke="#9b9ca8" stroke-width="2.1"/>
<rect x="26" y="340.5" width="18" height="5.5" rx="1.2" fill="none" stroke="#9b9ca8" stroke-width="2.1"/>
<path d="M31.5 346.5 A3.5 3.5 0 0 0 38.5 346.5" fill="none" stroke="#9b9ca8" stroke-width="2"/>
<line x1="35" y1="326.5" x2="35" y2="328.5" stroke="#9b9ca8" stroke-width="1.8"/>
<polygon points="43.78,1070.84 46.80,1071.26 46.80,1074.34 43.78,1074.76 42.60,1077.62 44.43,1080.05 42.25,1082.23 39.82,1080.40 36.96,1081.58 36.54,1084.60 33.46,1084.60 33.04,1081.58 30.18,1080.40 27.75,1082.23 25.57,1080.05 27.40,1077.62 26.22,1074.76 23.20,1074.34 23.20,1071.26 26.22,1070.84 27.40,1067.98 25.57,1065.55 27.75,1063.37 30.18,1065.20 33.04,1064.02 33.46,1061.00 36.54,1061.00 36.96,1064.02 39.82,1065.20 42.25,1063.37 44.43,1065.55 42.60,1067.98" fill="none" stroke="#9b9ca8" stroke-width="2.0" stroke-linejoin="round"/>
<circle cx="35" cy="1072.8" r="3.9" fill="none" stroke="#9b9ca8" stroke-width="2.0"/>
<path d="M26 1122 L26 1133.5 C26 1138 30 1142 35 1144.6 C40 1142 44 1138 44 1133.5 L44 1122 C41 1122.4 37.5 1122 35 1120.8 C32.5 1122 29 1122.4 26 1122 Z" fill="none" stroke="#9b9ca8" stroke-width="2.1" stroke-linejoin="round"/>
<circle cx="35" cy="1253.2" r="11.5" fill="none" stroke="#9b9ca8" stroke-width="2.1"/>
<path d="M31.6 1250 A3.5 3.5 0 1 1 36.4 1253.3 C35.3 1253.9 35 1254.5 35 1256" fill="none" stroke="#9b9ca8" stroke-width="2" stroke-linecap="round"/>
<circle cx="35" cy="1259" r="1.2" fill="#9b9ca8"/>
<path d="M2 1187 C5 1179 10 1174 18 1171 L20 1171 L20 1187 Z" fill="#c7d3ea"/>
<path d="M2 1187 C5 1183 9 1181 14 1181 L20 1182 L20 1187 Z" fill="#4caf3e"/>
<path d="M10 1187 L19 1176" stroke="#1a1d20" stroke-width="1.5"/>
<clipPath id="admclip"><rect x="1" y="1160" width="64.5" height="30"/></clipPath><clipPath id="logoclip"><rect x="1" y="1190" width="66" height="30"/></clipPath>
<g clip-path="url(#admclip)">
<text x="20.39" y="1186.00" font-size="18.19" font-weight="400" fill="#a0a1ad" stroke="#a0a1ad" stroke-width="0.42" textLength="48.84" lengthAdjust="spacingAndGlyphs">admin</text>
</g><g clip-path="url(#logoclip)">
<text x="0.33" y="1211.80" font-size="18.30" font-weight="400" fill="#a0a1ad" stroke="#a0a1ad" stroke-width="0.42" textLength="34.19" lengthAdjust="spacingAndGlyphs">logo</text>
</g>
<rect x="1" y="1201.5" width="4.6" height="16" fill="#1a1d20"/>
<rect x="93.9" y="30.9" width="7.2" height="7.2" rx="0.6" fill="none" stroke="#ccccdc" stroke-width="1.8"/>
<rect x="103.9" y="30.9" width="7.2" height="7.2" rx="0.6" fill="none" stroke="#ccccdc" stroke-width="1.8"/>
<rect x="93.9" y="40.9" width="7.2" height="7.2" rx="0.6" fill="none" stroke="#ccccdc" stroke-width="1.8"/>
<rect x="103.9" y="40.9" width="7.2" height="7.2" rx="0.6" fill="none" stroke="#ccccdc" stroke-width="1.8"/>
<polygon points="603.40,30.30 606.10,36.18 612.53,36.93 607.77,41.32 609.04,47.67 603.40,44.50 597.76,47.67 599.03,41.32 594.27,36.93 600.70,36.18" fill="none" stroke="#d3d3e0" stroke-width="1.8" stroke-linejoin="round"/>
<circle cx="639.5" cy="39" r="2.7" fill="none" stroke="#d3d3e0" stroke-width="1.8"/>
<circle cx="650.8" cy="33.5" r="2.7" fill="none" stroke="#d3d3e0" stroke-width="1.8"/>
<circle cx="650.8" cy="45" r="2.7" fill="none" stroke="#d3d3e0" stroke-width="1.8"/>
<path d="M642 37.7 L648.3 34.5 M642 40.3 L648.3 43.6" stroke="#d3d3e0" stroke-width="1.8"/>
<rect x="1922.5" y="19.5" width="51" height="39" rx="2" fill="#1a1d20" stroke="#2b2e33" stroke-width="1"/>
<rect x="1984.5" y="19.5" width="44" height="39" rx="2" fill="#1a1d20" stroke="#2b2e33" stroke-width="1"/>
<rect x="2039.5" y="19.5" width="43" height="39" rx="2" fill="#1a1d20" stroke="#2b2e33" stroke-width="1"/>
<rect x="2093.5" y="19.5" width="221" height="39" rx="2" fill="#1a1d20" stroke="#2b2e33" stroke-width="1"/>
<rect x="2325.5" y="19.5" width="85" height="39" rx="2" fill="#1a1d20" stroke="#2b2e33" stroke-width="1"/>
<rect x="2421.5" y="19.5" width="43" height="39" rx="2" fill="#1a1d20" stroke="#2b2e33" stroke-width="1"/>
<line x1="2271.5" y1="20" x2="2271.5" y2="58" stroke="#2b2e33" stroke-width="1"/>
<line x1="2369.5" y1="20" x2="2369.5" y2="58" stroke="#2b2e33" stroke-width="1"/>
<rect x="1933" y="36.8" width="4.3" height="10.2" fill="#a9aab6"/>
<rect x="1938.3" y="33.3" width="4.3" height="13.7" fill="#a9aab6"/>
<rect x="1943.8" y="39" width="4.3" height="8.0" fill="#a9aab6"/>
<rect x="1949" y="31" width="4.3" height="16.0" fill="#a9aab6"/>
<path d="M1951 35.8 h3.5 v-3 h4.5 v3 h3.5 v4.5 h-3.5 v3 h-4.5 v-3 h-3.5 z" fill="none" stroke="#1a1d20" stroke-width="1.6"/>
<path d="M1955.5 32.8 h3.5 v3.5 h3.5 v3.5 h-3.5 v3.5 h-3.5 v-3.5 h-3.5 v-3.5 h3.5 z" fill="url(#plus)"/>
<path d="M1999 31.5 L2010.2 31.5 L2014.2 35.5 L2014.2 45.8 Q2014.2 47.2 2012.8 47.2 L2000.2 47.2 Q1998.8 47.2 1998.8 45.8 L1998.8 32.8 Q1998.8 31.5 2000 31.5 Z" fill="none" stroke="#9b9ca8" stroke-width="1.7" stroke-linejoin="round"/>
<path d="M2002.5 31.8 L2002.5 34.8 L2007.5 34.8 L2007.5 31.8 M2001.8 47 L2001.8 41.8 L2011 41.8 L2011 47" fill="none" stroke="#9b9ca8" stroke-width="1.7"/>
<polygon points="2068.03,37.57 2070.22,37.92 2070.22,40.28 2068.03,40.63 2067.11,42.85 2068.41,44.65 2066.75,46.31 2064.95,45.01 2062.73,45.93 2062.38,48.12 2060.02,48.12 2059.67,45.93 2057.45,45.01 2055.65,46.31 2053.99,44.65 2055.29,42.85 2054.37,40.63 2052.18,40.28 2052.18,37.92 2054.37,37.57 2055.29,35.35 2053.99,33.55 2055.65,31.89 2057.45,33.19 2059.67,32.27 2060.02,30.08 2062.38,30.08 2062.73,32.27 2064.95,33.19 2066.75,31.89 2068.41,33.55 2067.11,35.35" fill="none" stroke="#9b9ca8" stroke-width="1.7" stroke-linejoin="round"/>
<circle cx="2061.2" cy="39.1" r="2.8" fill="none" stroke="#9b9ca8" stroke-width="1.7"/>
<circle cx="2115.1" cy="39.3" r="8.5" fill="none" stroke="#9b9ca8" stroke-width="1.9"/>
<path d="M2115.3 33.5 L2115.3 39.8 L2112 39.8" fill="none" stroke="#9b9ca8" stroke-width="1.6"/>
<text x="2136.87" y="44.00" font-size="17.72" font-weight="700" fill="#a2a3b0" stroke="#a2a3b0" stroke-width="0.1" textLength="90.79" lengthAdjust="spacingAndGlyphs">Last 7 days</text>
<path d="M2246.8 36.6 L2251.2 41.4 L2255.6 36.6" fill="none" stroke="#9b9ca8" stroke-width="1.8" stroke-linecap="round" stroke-linejoin="round"/>
<circle cx="2292.5" cy="38.3" r="7.7" fill="none" stroke="#9b9ca8" stroke-width="1.9"/>
<path d="M2288 38.3 L2297 38.3 M2298 43.8 L2302 47.8" stroke="#9b9ca8" stroke-width="1.9" stroke-linecap="round"/>
<path d="M2340.5 33.5 A 8.3 8.3 0 0 1 2355.5 38.5" fill="none" stroke="#9b9ca8" stroke-width="1.6"/>
<path d="M2354 45.5 A 8.3 8.3 0 0 1 2338.7 40" fill="none" stroke="#9b9ca8" stroke-width="1.6"/>
<path d="M2339.5 30 L2339.8 34.3 L2344.2 34" fill="none" stroke="#9b9ca8" stroke-width="1.6" stroke-linejoin="round"/>
<path d="M2355.5 48.8 L2355.3 44.6 L2351 44.9" fill="none" stroke="#9b9ca8" stroke-width="1.6" stroke-linejoin="round"/>
<path d="M2385.7 36.6 L2390.0 41.4 L2394.3 36.6" fill="none" stroke="#9b9ca8" stroke-width="1.8" stroke-linecap="round" stroke-linejoin="round"/>
<rect x="2434.5" y="30.5" width="17.6" height="13.6" rx="1.8" fill="none" stroke="#9b9ca8" stroke-width="1.7"/>
<path d="M2435 40.5 L2452 40.5 M2440.8 44.5 L2440.8 47.8 L2446 47.8 L2446 44.5" fill="none" stroke="#9b9ca8" stroke-width="1.6"/>
<path d="M269.9 96.4 L273.7 100.8 L277.5 96.4" fill="none" stroke="#ccccdc" stroke-width="1.5" stroke-linecap="round" stroke-linejoin="round"/>
<path d="M566.9 96.4 L570.9 100.8 L574.9 96.4" fill="none" stroke="#ccccdc" stroke-width="1.5" stroke-linecap="round" stroke-linejoin="round"/>
<path d="M756.1 96.4 L760.0 100.8 L763.9 96.4" fill="none" stroke="#ccccdc" stroke-width="1.5" stroke-linecap="round" stroke-linejoin="round"/>
<path d="M97.3 147.2 L101.25 151.4 L105.2 147.2" fill="none" stroke="#ccccdc" stroke-width="1.5" stroke-linecap="round" stroke-linejoin="round"/>
<path d="M1195 197 L1199.0 201.6 L1203 197" fill="none" stroke="#9b9ca8" stroke-width="1.4" stroke-linecap="round" stroke-linejoin="round"/>
<path d="M1958.8 874.2 L1963.8 874.2 L1963.8 869.2" fill="none" stroke="#6b6d75" stroke-width="1.5"/>
<line x1="0" y1="1292.5" x2="2467" y2="1292.5" stroke="#3a3b3e" stroke-width="1"/>
<path d="M0 1280 L0 1293 L12 1293 L12 1292 A 11 11 0 0 1 1 1281 Z" fill="#5b8580"/>
<path d="M12 1292.5 A 11.5 11.5 0 0 1 0.5 1281" fill="none" stroke="#3a3d40" stroke-width="1"/>
</svg>
</body></html>
